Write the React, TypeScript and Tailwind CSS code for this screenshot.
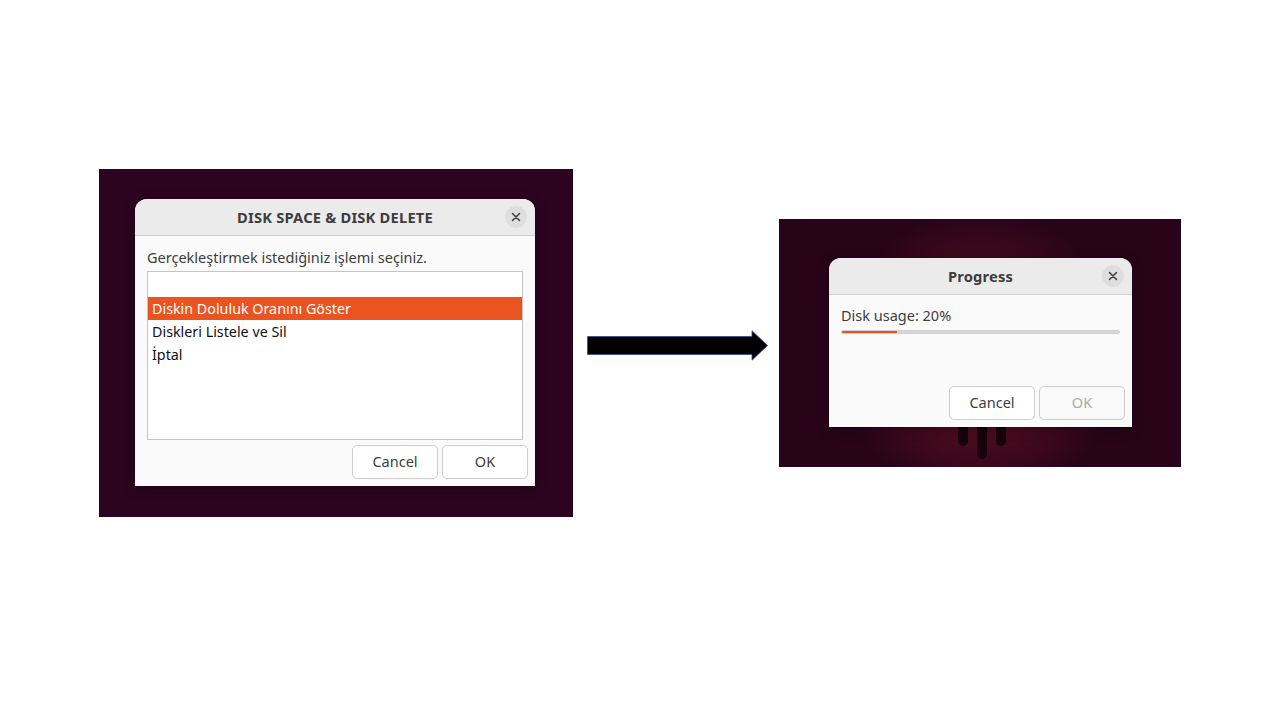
import * as React from "react";

const font = { fontFamily: '"Noto Sans", "Open Sans", sans-serif' };

const CloseBtn = () => (
  <div className="absolute right-[8px] top-1/2 -translate-y-1/2 w-[22px] h-[22px] rounded-full bg-[#dedede] flex items-center justify-center">
    <svg width="10" height="10" viewBox="0 0 10 10">
      <path d="M1.5 1.5 L8.5 8.5 M8.5 1.5 L1.5 8.5" stroke="#3d3d3d" strokeWidth="1.5" strokeLinecap="round" />
    </svg>
  </div>
);

const Header = ({ title }: { title: string }) => (
  <div className="relative h-[37px] bg-[#ebebeb] border-b border-[#cfcfcf] rounded-t-[12px] flex items-center justify-center">
    <span className="text-[14.7px] font-bold text-[#3d3d3d] tracking-[0.2px]">{title}</span>
    <CloseBtn />
  </div>
);

const Btn = ({ label, disabled }: { label: string; disabled?: boolean }) => (
  <div
    className={
      "w-[86px] h-[34px] rounded-[5px] border border-[#cdcdcd] flex items-center justify-center text-[14.5px] " +
      (disabled ? "text-[#a9a9a9] bg-[#fafafa]" : "text-[#3d3d3d] bg-white")
    }
  >
    {label}
  </div>
);

const ChoiceDialog = () => (
  <div className="w-[400px] h-[287px] bg-[#fafafa] rounded-t-[12px] flex flex-col shadow-[0_2px_12px_rgba(0,0,0,0.35)]">
    <Header title="DISK SPACE & DISK DELETE" />
    <div className="px-[12px] pt-[10px] flex flex-col">
      <div className="text-[14.5px] text-[#3d3d3d] leading-[22px] h-[25px]">
        Gerçekleştirmek istediğiniz işlemi seçiniz.
      </div>
      <div className="h-[169px] bg-white border border-[#c4c4c4] flex flex-col text-[14.3px] leading-[23px]">
        <div className="h-[25px]" />
        <div className="h-[23px] bg-[#e95420] text-white pl-[4px]">Diskin Doluluk Oranını Göster</div>
        <div className="h-[23px] text-[#111111] pl-[4px]">Diskleri Listele ve Sil</div>
        <div className="h-[23px] text-[#111111] pl-[4px]">İptal</div>
      </div>
    </div>
    <div className="flex justify-end gap-[4px] pr-[7px] pt-[5px]">
      <Btn label="Cancel" />
      <Btn label="OK" />
    </div>
  </div>
);

const ProgressDialog = () => (
  <div className="relative z-10 w-[303px] h-[169px] bg-[#fafafa] rounded-t-[12px] flex flex-col shadow-[0_2px_12px_rgba(0,0,0,0.35)]">
    <Header title="Progress" />
    <div className="px-[12px] pt-[10px]">
      <div className="text-[14.5px] text-[#3d3d3d] leading-[20px]">Disk usage: 20%</div>
      <div className="mt-[5px] h-[4px] w-[279px] rounded-full bg-[#d8d8d8] border border-[#cfcfcf] overflow-hidden">
        <div className="h-full w-[20%] bg-[#e95420]" />
      </div>
    </div>
    <div className="mt-auto flex justify-end gap-[4px] pr-[7px] pb-[7px]">
      <Btn label="Cancel" />
      <Btn label="OK" disabled />
    </div>
  </div>
);

const Arrow = () => (
  <svg width="181" height="31" viewBox="0 0 181 31">
    <path
      d="M0.5 6.5 H165 V0.8 L180.5 15.5 L165 30.2 V24.5 H0.5 Z"
      fill="#000"
      stroke="#2f4f8f"
      strokeWidth="0.8"
    />
  </svg>
);

export default function App() {
  return (
    <div className="w-[1280px] h-[720px] bg-white" style={font}>
      <div className="h-[686px] flex items-center">
        {/* left screenshot */}
        <div className="ml-[99px] w-[474px] h-[348px] bg-[#2c0420] pl-[36px] pt-[30px]">
          <ChoiceDialog />
        </div>
        <div className="ml-[14px] mt-[4px]">
          <Arrow />
        </div>
        {/* right screenshot */}
        <div className="relative ml-[11px] w-[402px] h-[248px] overflow-hidden bg-[#290419] pl-[50px] pt-[39px]">
          <div className="absolute left-[56px] top-[-8px] w-[290px] h-[290px] rounded-full bg-[radial-gradient(circle,rgba(130,22,38,0.85)_0%,rgba(100,16,34,0.55)_40%,rgba(41,4,25,0)_70%)]" />
          <div className="absolute left-[179px] top-[205px] w-[10px] h-[22px] rounded-b-full bg-[#17030c]" />
          <div className="absolute left-[198px] top-[205px] w-[10px] h-[35px] rounded-b-full bg-[#17030c]" />
          <div className="absolute left-[217px] top-[205px] w-[10px] h-[22px] rounded-b-full bg-[#17030c]" />
          <ProgressDialog />
        </div>
      </div>
    </div>
  );
}
